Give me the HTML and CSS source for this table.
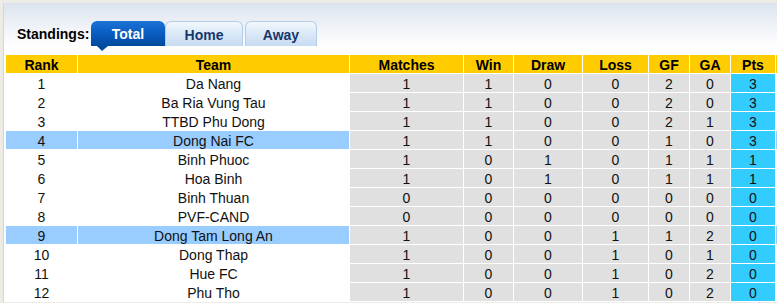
FILE: index.html
```html
<!DOCTYPE html>
<html>
<head>
<meta charset="utf-8">
<link rel="stylesheet" href="styles.css">
</head>
<body>
<div class="panel">
  <div class="tabbar">
    <span class="label">Standings:</span>
    <span class="tab active">Total</span>
    <span class="tab">Home</span>
    <span class="tab">Away</span>
  </div>
  <table class="standings">
    <colgroup>
      <col class="c-rank"><col class="c-team"><col class="c-m"><col class="c-w"><col class="c-d"><col class="c-l"><col class="c-gf"><col class="c-ga"><col class="c-pts"><col class="c-x">
    </colgroup>
    <thead>
      <tr><th>Rank</th><th>Team</th><th>Matches</th><th>Win</th><th>Draw</th><th>Loss</th><th>GF</th><th>GA</th><th>Pts</th><th>&nbsp;</th></tr>
    </thead>
    <tbody>
      <tr><td>1</td><td>Da Nang</td><td class="n">1</td><td class="n">1</td><td class="n">0</td><td class="n">0</td><td class="n">2</td><td class="n">0</td><td class="p">3</td><td></td></tr>
      <tr><td>2</td><td>Ba Ria Vung Tau</td><td class="n">1</td><td class="n">1</td><td class="n">0</td><td class="n">0</td><td class="n">2</td><td class="n">0</td><td class="p">3</td><td></td></tr>
      <tr><td>3</td><td>TTBD Phu Dong</td><td class="n">1</td><td class="n">1</td><td class="n">0</td><td class="n">0</td><td class="n">2</td><td class="n">1</td><td class="p">3</td><td></td></tr>
      <tr class="hl"><td>4</td><td>Dong Nai FC</td><td class="n">1</td><td class="n">1</td><td class="n">0</td><td class="n">0</td><td class="n">1</td><td class="n">0</td><td class="p">3</td><td></td></tr>
      <tr><td>5</td><td>Binh Phuoc</td><td class="n">1</td><td class="n">0</td><td class="n">1</td><td class="n">0</td><td class="n">1</td><td class="n">1</td><td class="p">1</td><td></td></tr>
      <tr><td>6</td><td>Hoa Binh</td><td class="n">1</td><td class="n">0</td><td class="n">1</td><td class="n">0</td><td class="n">1</td><td class="n">1</td><td class="p">1</td><td></td></tr>
      <tr><td>7</td><td>Binh Thuan</td><td class="n">0</td><td class="n">0</td><td class="n">0</td><td class="n">0</td><td class="n">0</td><td class="n">0</td><td class="p">0</td><td></td></tr>
      <tr><td>8</td><td>PVF-CAND</td><td class="n">0</td><td class="n">0</td><td class="n">0</td><td class="n">0</td><td class="n">0</td><td class="n">0</td><td class="p">0</td><td></td></tr>
      <tr class="hl"><td>9</td><td>Dong Tam Long An</td><td class="n">1</td><td class="n">0</td><td class="n">0</td><td class="n">1</td><td class="n">1</td><td class="n">2</td><td class="p">0</td><td></td></tr>
      <tr><td>10</td><td>Dong Thap</td><td class="n">1</td><td class="n">0</td><td class="n">0</td><td class="n">1</td><td class="n">0</td><td class="n">1</td><td class="p">0</td><td></td></tr>
      <tr><td>11</td><td>Hue FC</td><td class="n">1</td><td class="n">0</td><td class="n">0</td><td class="n">1</td><td class="n">0</td><td class="n">2</td><td class="p">0</td><td></td></tr>
      <tr><td>12</td><td>Phu Tho</td><td class="n">1</td><td class="n">0</td><td class="n">0</td><td class="n">1</td><td class="n">0</td><td class="n">2</td><td class="p">0</td><td></td></tr>
    </tbody>
  </table>
</div>
</body>
</html>
```

FILE: styles.css
```css
html, body {
  margin: 0;
  padding: 0;
  background: #ecebe4;
  overflow: hidden;
  font-family: "Liberation Sans", Arial, sans-serif;
}

.panel {
  margin: 3px 0 0 3px;
  border-left: 1px solid #d6d6d0;
  background: linear-gradient(to bottom, #dde4ee 0, #ffffff 44px, #ffffff 100%);
  padding-top: 18px;
  width: 900px;
}

.tabbar {
  display: flex;
  align-items: stretch;
  height: 25px;
  padding-left: 13px;
}

.label {
  font-weight: bold;
  font-size: 14px;
  color: #000;
  align-self: flex-end;
  line-height: 16px;
  padding-bottom: 4px;
  width: 74px;
}

.tab {
  position: relative;
  box-sizing: border-box;
  height: 25px;
  border: 1px solid #b3cce8;
  border-bottom: none;
  border-radius: 6px 6px 0 0;
  background: linear-gradient(to bottom, #f2f7fd 0, #d6e6f6 60%, #c8dcf1 100%);
  color: #17376a;
  font-weight: bold;
  font-size: 14px;
  line-height: 26px;
  text-align: center;
}

.tab:nth-of-type(2) { width: 74px; }
.tab:nth-of-type(3) { width: 78px; margin-right: 2px; }
.tab:nth-of-type(4) { width: 72px; }

.tab.active {
  border: none;
  background: linear-gradient(to bottom, #1a74d6 0, #0a5cc0 50%, #004a9c 100%);
  color: #fff;
}

.tab.active::after {
  content: "";
  position: absolute;
  left: 6px;
  top: 25px;
  width: 0;
  height: 0;
  border-left: 5px solid transparent;
  border-right: 6px solid transparent;
  border-top: 5px solid #004a9c;
}

.standings {
  margin: 8px 0 0 1px;
  border-collapse: separate;
  border-spacing: 1px;
  table-layout: fixed;
  width: 900px;
  background: #fff;
  font-size: 14px;
}

.c-rank { width: 71px; }
.c-team { width: 271px; }
.c-m { width: 113px; }
.c-w { width: 49px; }
.c-d { width: 68px; }
.c-l { width: 65px; }
.c-gf { width: 40px; }
.c-ga { width: 40px; }
.c-pts { width: 44px; }

.standings th,
.standings td {
  box-sizing: border-box;
  padding: 2px 0 0 0;
  height: 18px;
  line-height: 16px;
  text-align: center;
  white-space: nowrap;
  overflow: hidden;
  color: #111;
}

.standings th {
  background: #ffcc00;
  font-weight: bold;
  color: #000;
}

.standings tr td { background: #fff; }
.standings tr.hl td { background: #99ccff; }
.standings tr td.n { background: #e0e0e0; }
.standings tr td.p { background: #33ccff; }
.standings tr.hl td.n { background: #e0e0e0; }
.standings tr.hl td.p { background: #33ccff; }
```
